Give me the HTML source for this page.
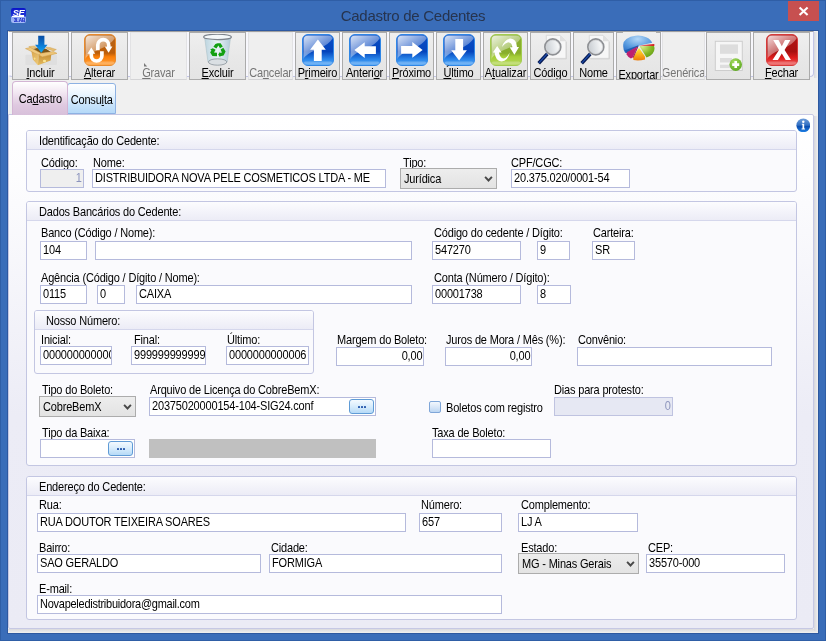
<!DOCTYPE html>
<html lang="pt-BR"><head><meta charset="utf-8"><title>Cadastro de Cedentes</title>
<style>
*{box-sizing:border-box;margin:0;padding:0}
html,body{width:826px;height:641px;overflow:hidden}
body{position:relative;background:#3A6DB9;font-family:"Liberation Sans",sans-serif;font-size:12.4px;line-height:12px;color:#000;letter-spacing:-0.19px}
#root{position:absolute;left:0;top:0;width:826px;height:641px;will-change:transform}
#win{position:absolute;left:0;top:0;width:826px;height:641px;border:1px solid #2F5EA6;}
#title{position:absolute;left:0;top:6px;width:826px;text-align:center;font-size:15px;line-height:20px;color:#26344F;letter-spacing:-0.28px}
#close{position:absolute;left:788px;top:1px;width:31px;height:20px;background:#C75050}
#client{position:absolute;left:8px;top:31px;width:810px;height:602px;background:#F0F0F0;box-shadow:0 0 0 1px rgba(24,56,120,0.38)}
#band{position:absolute;left:8px;top:31px;width:806px;height:46px;background:#F7F7FC;border:1px solid #C3C5E6;border-top:1px solid #9F9F9F;border-left:1px solid #fff;border-radius:0 0 4px 4px}
.tb{position:absolute;top:32px;height:48px;border:1px solid #ABABAB;background:linear-gradient(#EFEFEF,#E8E8E8 50%,#E4E4E4);overflow:hidden}
.tb.dis{border-color:#E6E6E8 #E2E2E4 #D4D4D6 #E2E2E4;background:#EFEFEF;color:#757575}
.tb .lb{position:absolute;left:-20px;right:-20px;top:34px;text-align:center;white-space:nowrap;height:14px;transform:scaleX(.887);transform-origin:50% 50%}
.tb svg{position:absolute}
u{text-decoration:underline;text-underline-offset:1px}
.tab{position:absolute;white-space:nowrap;text-align:center}
#page{position:absolute;left:8px;top:114px;width:806px;height:515px;border-radius:0 2px 2px 2px;border:1px solid #C6C8E4;background:linear-gradient(#FFFFFF 0px,#FDFDFE 60px,#ECECF6 300px,#EBEBF5 100%);}
.gb{position:absolute;border:1px solid #C3C6E2;border-radius:3px;background:#FAFAFD;}
.gb .hd{position:absolute;left:0;right:0;top:0;height:19px;border-bottom:1px solid #D5D7EC;background:linear-gradient(#FCFCFE,#ECECF6);border-radius:2px 2px 0 0}
.l{position:absolute;white-space:nowrap;height:13px;transform:scaleX(.887);transform-origin:0 50%}
.t{display:inline-block;white-space:nowrap;transform:scaleX(.887);transform-origin:0 50%}
.in.r .t{transform-origin:100% 50%}
.tab .t{transform-origin:50% 50%}
.in{position:absolute;border:1px solid #B5BADC;background:#fff;white-space:nowrap;overflow:hidden;padding:2px 0 0 2px;height:19px}
.in.r{text-align:right;padding-right:1px}
.in.dis{background:#EFEFEF;color:#8B93BD}
.sel{position:absolute;border:1px solid #ACACAC;background:linear-gradient(#EDEDED,#E3E3E3);height:21px;white-space:nowrap;padding:4px 0 0 3px;overflow:hidden}
.sel svg{position:absolute;right:3px;top:7px}
.dots{position:absolute;width:25px;height:15px;border:1px solid #5F9BD6;border-radius:3px;background:linear-gradient(#F4FAFF,#D7ECFC 50%,#B6DAF7);}
.dots i{position:absolute;top:6px;width:2px;height:2px;background:#2C5CAE;border-radius:0.5px}
</style></head>
<body>
<div id="root">
<div id="win"></div>
<div id="title">Cadastro de Cedentes</div>
<svg style="position:absolute;left:11px;top:8px" width="15" height="15" viewBox="0 0 16 16">
<defs><linearGradient id="ai" x1="0" y1="0" x2="0" y2="1"><stop offset="0" stop-color="#0A14C8"/><stop offset="0.55" stop-color="#2038D8"/><stop offset="0.6" stop-color="#8FA6F2"/><stop offset="1" stop-color="#A9BEF8"/></linearGradient></defs>
<rect x="0" y="0" width="16" height="16" rx="2.5" fill="url(#ai)"/>
<text x="8" y="9" font-family="Liberation Sans,sans-serif" font-size="10" font-weight="bold" font-style="italic" fill="#fff" text-anchor="middle" letter-spacing="-0.5">SE</text>
<rect x="1" y="8.4" width="13" height="1.2" fill="#fff"/>
<text x="9" y="14.5" font-family="Liberation Sans,sans-serif" font-size="5" font-weight="bold" fill="#1020C0" text-anchor="middle">3LAB</text>
</svg>
<div id="close"><svg width="31" height="20" viewBox="0 0 31 20" style="position:absolute;left:0;top:0"><path d="M11.6 6.6 L19.6 14 M19.6 6.6 L11.6 14" stroke="#fff" stroke-width="2.1" fill="none"/></svg></div>
<div id="client"></div>
<div id="band"></div>
<div style="position:absolute;left:814px;top:32px;width:4px;height:46px;background:linear-gradient(90deg,#D8D8DC,#F2F2F2)"></div>
<svg width="0" height="0" style="position:absolute"><defs>
<linearGradient id="gBlue" x1="0" y1="0" x2="0" y2="1"><stop offset="0" stop-color="#0A4CC4"/><stop offset="0.55" stop-color="#0444BC"/><stop offset="0.8" stop-color="#2A86EA"/><stop offset="1" stop-color="#56A8F6"/></linearGradient>
<linearGradient id="gOr" x1="0" y1="0" x2="0" y2="1"><stop offset="0" stop-color="#B86418"/><stop offset="0.6" stop-color="#BC5E0A"/><stop offset="0.72" stop-color="#FA7E08"/><stop offset="1" stop-color="#FFA23C"/></linearGradient>
<linearGradient id="gGr" x1="0" y1="0" x2="0" y2="1"><stop offset="0" stop-color="#8AAE30"/><stop offset="0.6" stop-color="#88AE2C"/><stop offset="0.72" stop-color="#A6CE38"/><stop offset="1" stop-color="#B6D860"/></linearGradient>
<linearGradient id="gRd" x1="0" y1="0" x2="0" y2="1"><stop offset="0" stop-color="#B41616"/><stop offset="0.55" stop-color="#A81010"/><stop offset="0.75" stop-color="#DE1C1C"/><stop offset="1" stop-color="#EE6060"/></linearGradient>
<linearGradient id="gGloss" x1="0" y1="0" x2="0.8" y2="1"><stop offset="0" stop-color="#fff" stop-opacity="0.85"/><stop offset="0.7" stop-color="#fff" stop-opacity="0.28"/><stop offset="1" stop-color="#fff" stop-opacity="0.15"/></linearGradient>
<linearGradient id="gLens" x1="0" y1="0.6" x2="1" y2="0.4"><stop offset="0" stop-color="#C6CBD0"/><stop offset="0.5" stop-color="#E2E5E8"/><stop offset="1" stop-color="#FFFFFF"/></linearGradient>
<linearGradient id="gBoxL" x1="0" y1="0" x2="1" y2="1"><stop offset="0" stop-color="#D9A64C"/><stop offset="1" stop-color="#EFCC7C"/></linearGradient>
<linearGradient id="gBoxR" x1="0" y1="0" x2="0" y2="1"><stop offset="0" stop-color="#C48E36"/><stop offset="1" stop-color="#E6BC5E"/></linearGradient>
<linearGradient id="gArrow" x1="0" y1="0" x2="0" y2="1"><stop offset="0" stop-color="#0A4EA4"/><stop offset="0.5" stop-color="#0C74CE"/><stop offset="1" stop-color="#12AAF4"/></linearGradient>
<linearGradient id="gBin" x1="0" y1="0" x2="1" y2="0"><stop offset="0" stop-color="#BCD4DF"/><stop offset="0.5" stop-color="#E9F2F6"/><stop offset="1" stop-color="#B2CCD9"/></linearGradient>
<radialGradient id="gPieB" cx="0.5" cy="0.2" r="0.8"><stop offset="0" stop-color="#B4D8F8"/><stop offset="0.6" stop-color="#5A9CE0"/><stop offset="1" stop-color="#2E72C8"/></radialGradient>
<radialGradient id="gPieG" cx="0.2" cy="0.1" r="1"><stop offset="0" stop-color="#D4E880"/><stop offset="0.6" stop-color="#86B824"/><stop offset="1" stop-color="#5E9A14"/></radialGradient>
<linearGradient id="gPieY" x1="0" y1="0" x2="0" y2="1"><stop offset="0" stop-color="#FFF030"/><stop offset="0.6" stop-color="#F8A818"/><stop offset="1" stop-color="#EC7C0C"/></linearGradient>
<radialGradient id="gPlus" cx="0.4" cy="0.3" r="0.8"><stop offset="0" stop-color="#A6DC60"/><stop offset="1" stop-color="#58A41C"/></radialGradient>
</defs></svg>
<div class="tb" style="left:12px;width:57px"><svg width="32" height="32" viewBox="0 0 32 32" style="left:12px;top:1px"><rect x="0.4" y="20.7" width="31.6" height="10.3" rx="1" fill="#DFDFDF"/><path d="M6.3 15.4 L11.6 14.1 L21 14.75 L26 17.9 L16 19.6 Z" fill="#7A5418"/><path d="M3.8 12.6 L9.75 11.9 L11.6 13.9 L6 14.6 Z" fill="#E9C57E" stroke="#CC9A44" stroke-width="0.4"/><path d="M21 13.2 L25 13.5 L31.3 15.5 L28.5 16.9 L22.25 15 Z" fill="#E6BE72" stroke="#CC9A44" stroke-width="0.4"/><path d="M6.3 16.9 L13.8 20.9 L12.9 31.3 L7.9 25.4 Z" fill="url(#gBoxL)"/><path d="M13.8 20.9 L26.3 20 L25.7 26.6 L12.9 31.3 Z" fill="url(#gBoxR)"/><path d="M0.5 14.6 L5.5 13.5 L16 19.25 L14 20.9 L9.75 19.1 Z" fill="#F0CB82" stroke="#CC9A44" stroke-width="0.5"/><path d="M16 19.25 L28.5 17.6 L32 19.4 L17.25 22.9 L13.8 20.9 Z" fill="#EEC67A" stroke="#CC9A44" stroke-width="0.5"/><ellipse cx="19.5" cy="27" rx="1.6" ry="1.2" fill="#FFF0A0" opacity="0.85"/><ellipse cx="9.6" cy="24.6" rx="0.9" ry="1.2" fill="#FFF0A0" opacity="0.7"/><path d="M13.2 1.75 L19.4 1.75 L19.4 10.7 L22.5 10.7 L16.3 18.8 L10 10.7 L13.2 10.7 Z" fill="url(#gArrow)"/></svg><div class="lb"><u>I</u>ncluir</div></div>
<div class="tb" style="left:71px;width:57px"><svg width="32" height="32" viewBox="0 0 32 32" style="left:12px;top:1px"><rect x="0.5" y="0.5" width="31" height="31" rx="5.5" fill="url(#gOr)" stroke="#E88A2C"/><path d="M1.5 25 Q3 20.5 15 15.5 Q27.5 10.5 30.5 4.5 Q29.5 1.5 26 1.5 L6 1.5 Q1.5 1.5 1.5 6 Z" fill="url(#gGloss)" opacity="1"/><rect x="1.5" y="27.5" width="29" height="3" rx="2" fill="#fff" opacity="0.22"/><path d="M7.3 19 L7.3 21.7 A5.3 5.3 0 0 0 17.9 21.7 L17.9 17.3" fill="none" stroke="#fff" stroke-width="3.7"/><path d="M3.4 19.8 L7.3 13.6 L11.2 19.8 Z" fill="#fff"/><path d="M13.8 16.2 L13.8 11.1 A5.45 5.45 0 0 1 24.7 11.1 L24.7 13" fill="none" stroke="#fff" stroke-width="3.7"/><path d="M20.8 12.4 L28.4 12.4 L24.6 18.8 Z" fill="#fff"/></svg><div class="lb"><u>A</u>lterar</div></div>
<div class="tb dis" style="left:130px;width:57px"><div class="lb"><u>G</u>ravar</div></div>
<svg style="position:absolute;left:144px;top:63px" width="4" height="4" viewBox="0 0 4 4"><path d="M0 0 L3.2 3.4 L0 3.4 Z" fill="#7A7A7A"/></svg>
<div class="tb" style="left:189px;width:57px"><svg width="32" height="32" viewBox="0 0 32 32" style="left:12px;top:1px"><path d="M2.6 3.4 L6 28 Q15.5 32.5 25.2 28 L28.6 3.4 Q15.5 7.5 2.6 3.4 Z" fill="url(#gBin)" stroke="#AFC2CA" stroke-width="0.6"/><ellipse cx="15.6" cy="28" rx="9.2" ry="3.2" fill="#DADFE3" stroke="#8C949C" stroke-width="0.8"/><ellipse cx="15.5" cy="2.9" rx="13.9" ry="2.7" fill="#F4F8FA" stroke="#7E848C" stroke-width="1.1"/><g fill="#12A012"><path d="M15.6 9.2 L18.6 9.2 L20.8 12.6 L18 14.2 L16.4 11.6 L14.4 14.4 L11.4 12.8 L13.4 9.9 Z"/><path d="M21.3 13.8 L23.6 17.6 L21.6 21.6 L18.2 22.2 L18.2 23.4 L16.2 20.4 L18.2 17.6 L18.2 19 L19.9 18.6 L18.6 15.4 Z"/><path d="M10.8 14.2 L13.6 15.8 L12 18.6 L15 18.8 L15 22.2 L10.4 22 L8.2 18.4 L9.4 16.2 L8.2 15.6 Z"/></g></svg><div class="lb"><u>E</u>xcluir</div></div>
<div class="tb dis" style="left:248px;width:45px"><div class="lb">Ca<u>n</u>celar</div></div>
<div class="tb" style="left:295px;width:45px"><svg width="32" height="32" viewBox="0 0 32 32" style="left:6px;top:1px"><rect x="0.5" y="0.5" width="31" height="31" rx="5.5" fill="url(#gBlue)" stroke="#2F86E6"/><path d="M1.5 25 Q3 20.5 15 15.5 Q27.5 10.5 30.5 4.5 Q29.5 1.5 26 1.5 L6 1.5 Q1.5 1.5 1.5 6 Z" fill="url(#gGloss)" opacity="1"/><rect x="1.5" y="27.5" width="29" height="3" rx="2" fill="#fff" opacity="0.22"/><path d="M15.9 5.4 L23.8 15.7 L19.7 15.7 L19.7 26.9 L11.9 26.9 L11.9 15.7 L8.1 15.7 Z" fill="#fff"/></svg><div class="lb">P<u>r</u>imeiro</div></div>
<div class="tb" style="left:342px;width:45px"><svg width="32" height="32" viewBox="0 0 32 32" style="left:6px;top:1px"><rect x="0.5" y="0.5" width="31" height="31" rx="5.5" fill="url(#gBlue)" stroke="#2F86E6"/><path d="M1.5 25 Q3 20.5 15 15.5 Q27.5 10.5 30.5 4.5 Q29.5 1.5 26 1.5 L6 1.5 Q1.5 1.5 1.5 6 Z" fill="url(#gGloss)" opacity="1"/><rect x="1.5" y="27.5" width="29" height="3" rx="2" fill="#fff" opacity="0.22"/><path d="M15.9 5.4 L23.8 15.7 L19.7 15.7 L19.7 26.9 L11.9 26.9 L11.9 15.7 L8.1 15.7 Z" fill="#fff" transform="rotate(-90 16 16)"/></svg><div class="lb">Anteri<u>o</u>r</div></div>
<div class="tb" style="left:389px;width:45px"><svg width="32" height="32" viewBox="0 0 32 32" style="left:6px;top:1px"><rect x="0.5" y="0.5" width="31" height="31" rx="5.5" fill="url(#gBlue)" stroke="#2F86E6"/><path d="M1.5 25 Q3 20.5 15 15.5 Q27.5 10.5 30.5 4.5 Q29.5 1.5 26 1.5 L6 1.5 Q1.5 1.5 1.5 6 Z" fill="url(#gGloss)" opacity="1"/><rect x="1.5" y="27.5" width="29" height="3" rx="2" fill="#fff" opacity="0.22"/><path d="M15.9 5.4 L23.8 15.7 L19.7 15.7 L19.7 26.9 L11.9 26.9 L11.9 15.7 L8.1 15.7 Z" fill="#fff" transform="rotate(90 16 16)"/></svg><div class="lb"><u>P</u>róximo</div></div>
<div class="tb" style="left:436px;width:45px"><svg width="32" height="32" viewBox="0 0 32 32" style="left:6px;top:1px"><rect x="0.5" y="0.5" width="31" height="31" rx="5.5" fill="url(#gBlue)" stroke="#2F86E6"/><path d="M1.5 25 Q3 20.5 15 15.5 Q27.5 10.5 30.5 4.5 Q29.5 1.5 26 1.5 L6 1.5 Q1.5 1.5 1.5 6 Z" fill="url(#gGloss)" opacity="1"/><rect x="1.5" y="27.5" width="29" height="3" rx="2" fill="#fff" opacity="0.22"/><path d="M15.9 5.4 L23.8 15.7 L19.7 15.7 L19.7 26.9 L11.9 26.9 L11.9 15.7 L8.1 15.7 Z" fill="#fff" transform="rotate(180 16 16)"/></svg><div class="lb"><u>Ú</u>ltimo</div></div>
<div class="tb" style="left:483px;width:45px"><svg width="32" height="32" viewBox="0 0 32 32" style="left:6px;top:1px"><rect x="0.5" y="0.5" width="31" height="31" rx="5.5" fill="url(#gGr)" stroke="#A2CC50"/><path d="M1.5 25 Q3 20.5 15 15.5 Q27.5 10.5 30.5 4.5 Q29.5 1.5 26 1.5 L6 1.5 Q1.5 1.5 1.5 6 Z" fill="url(#gGloss)" opacity="1"/><rect x="1.5" y="27.5" width="29" height="3" rx="2" fill="#fff" opacity="0.22"/><path d="M7.2 11.9 L11.6 18.5 L9 18.5 Q10 24 13.5 24.5 Q17 24 19.7 18.5 Q18 27 11.5 27.5 Q5.5 27 4.6 18.5 L2.8 18.5 Z" fill="#fff"/><path d="M24.4 20.7 L19.7 13.2 L22.4 13.2 Q21.8 8.5 18.2 8.3 Q15 8.8 11.9 12.9 Q14.5 5 20.5 4.6 Q26.5 5 27 13 L29 12.9 Z" fill="#fff"/></svg><div class="lb">A<u>t</u>ualizar</div></div>
<div class="tb" style="left:530px;width:41px"><svg width="32" height="32" viewBox="0 0 32 32" style="left:4px;top:1px"><path d="M11.3 1.3 L25 1.3 L31 7.3 L31 24.4 L11.3 24.4 Z" fill="#F7F7F7" stroke="#D4D4D4" stroke-width="0.8"/><path d="M25 1.3 L25 7.3 L31 7.3 Z" fill="#E0E0E0"/><path d="M12.5 24.9 L31.4 24.9 L31.4 8" stroke="#D2D2D2" stroke-width="0.9" fill="none"/><line x1="3.7" y1="29.3" x2="12.2" y2="20" stroke="#081A50" stroke-width="3.5" stroke-linecap="butt"/><line x1="4.2" y1="28.6" x2="12" y2="20" stroke="#1B4AA8" stroke-width="1.2" stroke-linecap="round"/><circle cx="17.8" cy="12.9" r="7.9" fill="url(#gLens)" stroke="#8E9094" stroke-width="1.8"/><circle cx="17.8" cy="12.9" r="6.7" fill="none" stroke="#D4D6D8" stroke-width="0.8"/></svg><div class="lb">Código</div></div>
<div class="tb" style="left:573px;width:41px"><svg width="32" height="32" viewBox="0 0 32 32" style="left:4px;top:1px"><path d="M11.3 1.3 L25 1.3 L31 7.3 L31 24.4 L11.3 24.4 Z" fill="#F7F7F7" stroke="#D4D4D4" stroke-width="0.8"/><path d="M25 1.3 L25 7.3 L31 7.3 Z" fill="#E0E0E0"/><path d="M12.5 24.9 L31.4 24.9 L31.4 8" stroke="#D2D2D2" stroke-width="0.9" fill="none"/><line x1="3.7" y1="29.3" x2="12.2" y2="20" stroke="#081A50" stroke-width="3.5" stroke-linecap="butt"/><line x1="4.2" y1="28.6" x2="12" y2="20" stroke="#1B4AA8" stroke-width="1.2" stroke-linecap="round"/><circle cx="17.8" cy="12.9" r="7.9" fill="url(#gLens)" stroke="#8E9094" stroke-width="1.8"/><circle cx="17.8" cy="12.9" r="6.7" fill="none" stroke="#D4D6D8" stroke-width="0.8"/></svg><div class="lb">Nome</div></div>
<div class="tb" style="left:616px;width:45px"><svg width="32" height="32" viewBox="0 0 32 32" style="left:6px;top:1px"><rect x="-0.5" y="-2" width="33.5" height="4" fill="#EEEEEE"/><path d="M0.2 11.5 A14.7 9.3 0 0 1 29.2 8.8 L15.5 11.8 L2.2 19 Q0 15.5 0.2 11.5 Z" fill="url(#gPieB)"/><path d="M2 16.2 L15.4 11.3 L15.6 12.6 L3.4 19.2 Q2.2 18 2 16.2 Z" fill="#1F5FB4"/><path d="M16 11.6 L31.3 10 L31.3 12 Z" fill="#D61E1E"/><path d="M16.6 12.3 L31 12 Q32.5 16 29.5 19.8 Q27 22.6 23.5 23.6 Z" fill="url(#gPieG)"/><path d="M16 14 L22 22.4 L22 25.4 Q16 27 10.4 26 L10.1 23 Z" fill="url(#gPieY)"/><path d="M14.4 12.6 L9.8 23.4 L7.9 24.4 Q4.6 22.6 3.6 20.4 L3.8 18.2 Z" fill="#BE2070"/><path d="M9.8 23.4 L14.4 12.6 L15 13.4 L10.6 23.6 Z" fill="#8E1450"/></svg><div class="lb" style="top:36px">Exportar</div></div>
<div style="position:absolute;left:623px;top:32px;width:33px;height:1px;background:#EEEEEE"></div>
<div class="tb dis" style="left:662px;width:43px"><div class="lb">Genérica</div></div>
<div class="tb" style="left:706px;width:45px"><svg width="32" height="32" viewBox="0 0 32 32" style="left:6px;top:7px"><rect x="2.3" y="1.3" width="27" height="29.2" fill="#F6F6F6" stroke="#CDCDCD" stroke-width="1"/><rect x="7" y="4.4" width="18" height="9.4" fill="#DDDDDD"/><rect x="7" y="18" width="12" height="4.5" fill="#DDDDDD"/><rect x="7" y="24.7" width="10" height="3.4" fill="#DDDDDD"/><circle cx="22.7" cy="24.6" r="6.3" fill="url(#gPlus)"/><path d="M19.2 24.6 L26.2 24.6 M22.7 21.1 L22.7 28.1" stroke="#fff" stroke-width="2.6"/></svg></div>
<div class="tb" style="left:753px;width:57px"><svg width="32" height="32" viewBox="0 0 32 32" style="left:12px;top:1px"><rect x="0.5" y="0.5" width="31" height="31" rx="5.5" fill="url(#gRd)" stroke="#D63A3A"/><path d="M1.5 25 Q3 20.5 15 15.5 Q27.5 10.5 30.5 4.5 Q29.5 1.5 26 1.5 L6 1.5 Q1.5 1.5 1.5 6 Z" fill="url(#gGloss)" opacity="1"/><rect x="1.5" y="27.5" width="29" height="3" rx="2" fill="#fff" opacity="0.22"/><path d="M7.2 6 L12.5 6 L15.8 12.2 L19 6 L24.4 6 L18.6 16 L25 26 L19.7 26 L15.8 19.6 L11.9 26 L6.5 26 L13 16 Z" fill="#fff"/></svg><div class="lb"><u>F</u>echar</div></div>
<div class="tab" style="z-index:2;left:12px;top:81px;width:56px;height:34px;border:1px solid #D3B5D4;border-bottom:none;border-radius:4px 4px 0 0;background:linear-gradient(#FFFFFF,#F3E9F3 30%,#DFC9E0 70%,#D8C0DA);padding-top:11px"><span class="t">Ca<u>d</u>astro</span></div>
<div class="tab" style="left:67px;top:83px;width:49px;height:31px;border:1px solid #8DB2E3;border-radius:3px 3px 0 0;background:linear-gradient(#FFFFFF,#EAF5FE 35%,#C6E2FA 75%,#B5D9F8);padding-top:10px"><span class="t">Consu<u>l</u>ta</span></div>
<div id="pageshadow" style="position:absolute;left:8px;top:629px;width:810px;height:4px;background:linear-gradient(#D9D9DD,#F0F0F0)"></div>
<div style="position:absolute;left:814px;top:116px;width:4px;height:515px;background:linear-gradient(90deg,#D6D6DC,#F0F0F0)"></div>
<div id="page"></div>
<svg style="position:absolute;left:795.7px;top:117.8px" width="14.6" height="14.6" viewBox="0 0 15 15"><defs><linearGradient id="gi" x1="0" y1="0" x2="0" y2="1"><stop offset="0" stop-color="#6E9EDA"/><stop offset="0.5" stop-color="#2F6EC2"/><stop offset="0.56" stop-color="#0B4CAC"/><stop offset="1" stop-color="#1C7EE4"/></linearGradient></defs><circle cx="7.5" cy="7.5" r="7.1" fill="url(#gi)"/><circle cx="7.5" cy="3.8" r="1.25" fill="#fff"/><path d="M6 6 L8.4 6 L8.4 10.8 L9.3 10.8 L9.3 11.8 L5.7 11.8 L5.7 10.8 L6.7 10.8 L6.7 7 L6 7 Z" fill="#fff"/></svg>
<div class="gb" style="left:26px;top:130px;width:771px;height:62px"><div class="hd"></div></div>
<div class="l" style="left:39px;top:135px">Identificação do Cedente:</div>
<div class="l" style="left:41px;top:156.7px">Código:</div>
<div class="l" style="left:93px;top:156.7px">Nome:</div>
<div class="l" style="left:403px;top:156.7px">Tipo:</div>
<div class="l" style="left:511px;top:156.7px">CPF/CGC:</div>
<div class="in r dis" style="left:40px;top:169px;width:44px"><span class="t">1</span></div>
<div class="in " style="left:92px;top:169px;width:294px"><span class="t">DISTRIBUIDORA NOVA PELE COSMETICOS LTDA - ME</span></div>
<div class="sel" style="left:400px;top:168px;width:97px"><span class="t">Jurídica</span><svg width="9" height="7" viewBox="0 0 9 7"><path d="M1.1 0.9 L4.5 4.5 L7.9 0.9" fill="none" stroke="#484848" stroke-width="1.9"/></svg></div>
<div class="in " style="left:511px;top:169px;width:119px"><span class="t">20.375.020/0001-54</span></div>
<div class="gb" style="left:26px;top:201px;width:771px;height:265px"><div class="hd"></div></div>
<div class="l" style="left:39px;top:206px">Dados Bancários do Cedente:</div>
<div class="l" style="left:41px;top:226.7px">Banco (Código / Nome):</div>
<div class="l" style="left:434px;top:226.7px">Código do cedente / Dígito:</div>
<div class="l" style="left:593px;top:226.7px">Carteira:</div>
<div class="in " style="left:40px;top:241px;width:47px"><span class="t">104</span></div>
<div class="in " style="left:95px;top:241px;width:317px"><span class="t"></span></div>
<div class="in " style="left:432px;top:241px;width:89px"><span class="t">547270</span></div>
<div class="in " style="left:537px;top:241px;width:33px"><span class="t">9</span></div>
<div class="in " style="left:592px;top:241px;width:43px"><span class="t">SR</span></div>
<div class="l" style="left:41px;top:271.7px">Agência (Código / Dígito / Nome):</div>
<div class="l" style="left:434px;top:271.7px">Conta (Número / Dígito):</div>
<div class="in " style="left:40px;top:285px;width:47px"><span class="t">0115</span></div>
<div class="in " style="left:97px;top:285px;width:28px"><span class="t">0</span></div>
<div class="in " style="left:136px;top:285px;width:276px"><span class="t">CAIXA</span></div>
<div class="in " style="left:432px;top:285px;width:89px"><span class="t">00001738</span></div>
<div class="in " style="left:537px;top:285px;width:34px"><span class="t">8</span></div>
<div class="gb" style="left:34px;top:310px;width:280px;height:64px"><div class="hd"></div></div>
<div class="l" style="left:46px;top:315px">Nosso Número:</div>
<div class="l" style="left:41px;top:333.7px">Inicial:</div>
<div class="l" style="left:134px;top:333.7px">Final:</div>
<div class="l" style="left:227px;top:333.7px">Último:</div>
<div class="in " style="left:40px;top:346px;width:72px"><span class="t">0000000000000</span></div>
<div class="in " style="left:131px;top:346px;width:75px"><span class="t">999999999999</span></div>
<div class="in " style="left:226px;top:346px;width:83px"><span class="t">0000000000006</span></div>
<div class="l" style="left:337px;top:333.7px">Margem do Boleto:</div>
<div class="l" style="left:446px;top:333.7px">Juros de Mora / Mês (%):</div>
<div class="l" style="left:578px;top:333.7px">Convênio:</div>
<div class="in r" style="left:336px;top:347px;width:88px"><span class="t">0,00</span></div>
<div class="in r" style="left:445px;top:347px;width:87px"><span class="t">0,00</span></div>
<div class="in " style="left:577px;top:347px;width:195px"><span class="t"></span></div>
<div class="l" style="left:42px;top:383.7px">Tipo do Boleto:</div>
<div class="l" style="left:150px;top:383.7px">Arquivo de Licença do CobreBemX:</div>
<div class="l" style="left:554px;top:383.7px">Dias para protesto:</div>
<div class="sel" style="left:39px;top:396px;width:97px"><span class="t">CobreBemX</span><svg width="9" height="7" viewBox="0 0 9 7"><path d="M1.1 0.9 L4.5 4.5 L7.9 0.9" fill="none" stroke="#484848" stroke-width="1.9"/></svg></div>
<div class="in " style="left:149px;top:397px;width:227px"><span class="t">20375020000154-104-SIG24.conf</span></div>
<div class="dots" style="left:349px;top:399px"><i style="left:8px"></i><i style="left:11px"></i><i style="left:14px"></i></div>
<div style="position:absolute;left:429px;top:401px;width:12px;height:12px;border:1px solid #7FA6D8;border-radius:2px;background:linear-gradient(#F2F7FD,#D9E7F8 50%,#BCD6F2)"></div>
<div class="l" style="left:446px;top:401.7px">Boletos com registro</div>
<div class="in r" style="left:554px;top:397px;width:119px;background:#E6E8F3;color:#8F97BE;border-color:#BFC3E0"><span class="t">0</span></div>
<div class="l" style="left:42px;top:426.7px">Tipo da Baixa:</div>
<div class="l" style="left:432px;top:426.7px">Taxa de Boleto:</div>
<div class="in " style="left:40px;top:439px;width:95px"><span class="t"></span></div>
<div class="dots" style="left:108px;top:441px"><i style="left:8px"></i><i style="left:11px"></i><i style="left:14px"></i></div>
<div style="position:absolute;left:149px;top:439px;width:227px;height:19px;background:#C0C0C0"></div>
<div class="in " style="left:432px;top:439px;width:119px"><span class="t"></span></div>
<div class="gb" style="left:26px;top:476px;width:771px;height:144px"><div class="hd"></div></div>
<div class="l" style="left:39px;top:481px">Endereço do Cedente:</div>
<div class="l" style="left:39px;top:498.7px">Rua:</div>
<div class="l" style="left:421px;top:498.7px">Número:</div>
<div class="l" style="left:521px;top:498.7px">Complemento:</div>
<div class="in " style="left:37px;top:513px;width:369px"><span class="t">RUA DOUTOR TEIXEIRA SOARES</span></div>
<div class="in " style="left:419px;top:513px;width:83px"><span class="t">657</span></div>
<div class="in " style="left:518px;top:513px;width:120px"><span class="t">LJ A</span></div>
<div class="l" style="left:39px;top:541.7px">Bairro:</div>
<div class="l" style="left:271px;top:541.7px">Cidade:</div>
<div class="l" style="left:521px;top:541.7px">Estado:</div>
<div class="l" style="left:648px;top:541.7px">CEP:</div>
<div class="in " style="left:37px;top:554px;width:224px"><span class="t">SAO GERALDO</span></div>
<div class="in " style="left:269px;top:554px;width:233px"><span class="t">FORMIGA</span></div>
<div class="sel" style="left:518px;top:553px;width:121px"><span class="t">MG - Minas Gerais</span><svg width="9" height="7" viewBox="0 0 9 7"><path d="M1.1 0.9 L4.5 4.5 L7.9 0.9" fill="none" stroke="#484848" stroke-width="1.9"/></svg></div>
<div class="in " style="left:646px;top:554px;width:139px"><span class="t">35570-000</span></div>
<div class="l" style="left:39px;top:582.7px">E-mail:</div>
<div class="in" style="left:37px;top:595px;width:465px;letter-spacing:-0.29px"><span class="t">Novapeledistribuidora@gmail.com</span></div>
</div>
</body></html>
